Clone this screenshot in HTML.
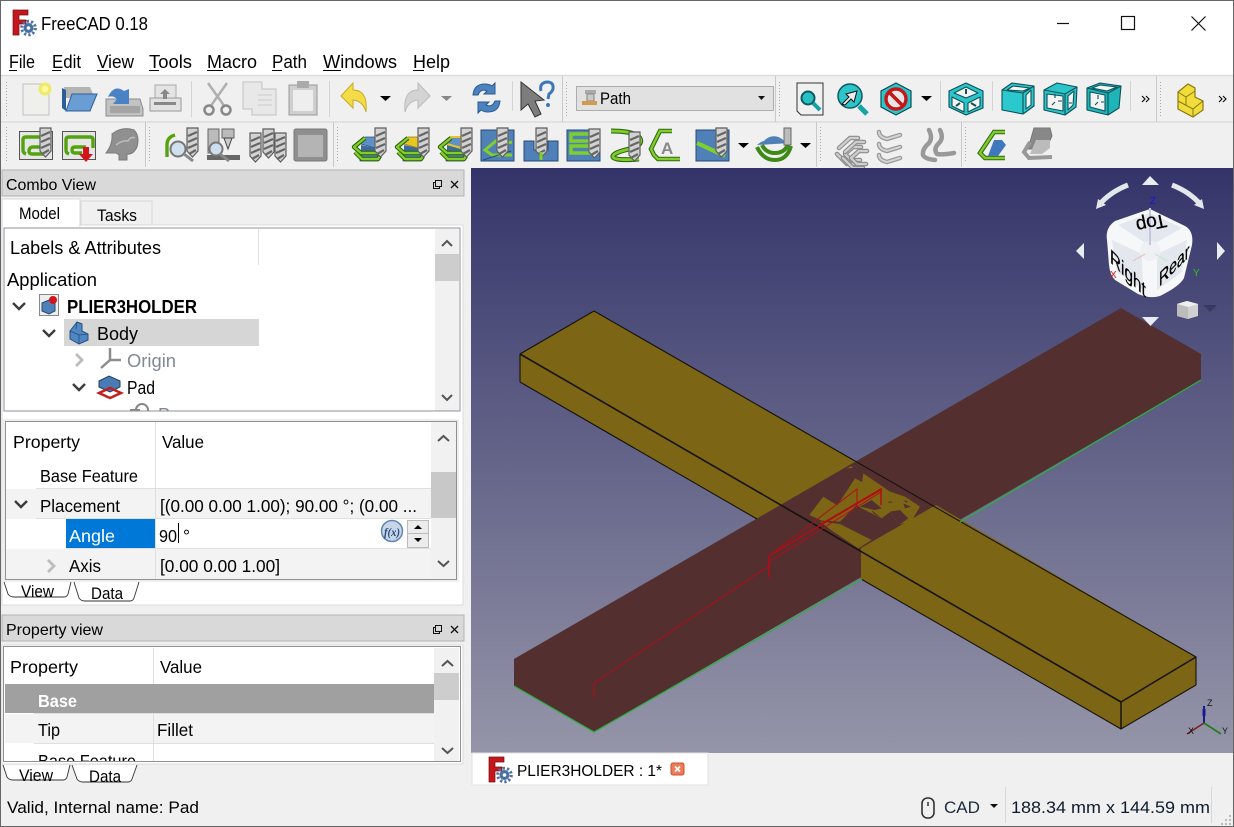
<!DOCTYPE html>
<html><head><meta charset="utf-8"><title>FreeCAD 0.18</title>
<style>
html,body{margin:0;padding:0;background:#f0f0f0;width:1234px;height:827px;overflow:hidden}
svg{display:block;font-family:"Liberation Sans",sans-serif}
</style></head><body>
<svg width="1234" height="827" viewBox="0 0 1234 827" xmlns="http://www.w3.org/2000/svg">
<defs>
<linearGradient id="bg" x1="0" y1="0" x2="0" y2="1"><stop offset="0" stop-color="#34346a"/><stop offset="1" stop-color="#9595a9"/></linearGradient>
<clipPath id="treeclip"><rect x="5" y="229" width="430" height="182"/></clipPath>
<clipPath id="pvclip"><rect x="5" y="648" width="429" height="113"/></clipPath>
<g id="dr"><path d="M0 0h11v23l-5.500 6-5.500-6z" fill="#d2d2d2" stroke="#5e5e5e" stroke-width="1.200"/><path d="M1 8l9-4M1 14l9-4M1 20l9-4M2 26l7-4" stroke="#666" stroke-width="2.200" fill="none"/></g>
<g id="logo"><path d="M0 0h15v5h-9v5h7v4h-7v11h-6z" fill="#c4161c" stroke="#7a0c10" stroke-width=".7"/><circle cx="15.500" cy="18" r="5" fill="#4a6fa5"/><circle cx="15.500" cy="18" r="6.800" fill="none" stroke="#4a6fa5" stroke-width="3" stroke-dasharray="2.200 2.100"/><circle cx="15.500" cy="18" r="1.800" fill="#fff"/></g>
<g id="stgreen" fill="none"><path d="M7 10L-4 19 3 25H21M-3 24l7 7H20l2-3" stroke="#2a5c10" stroke-width="4.400" stroke-linejoin="round"/><path d="M7 10L-4 19 3 25H21M-3 24l7 7H20l2-3" stroke="#80cf28" stroke-width="2.400" stroke-linejoin="round"/></g>
<g id="stbase"><rect x="2" y="25" width="18" height="8" fill="#4f80b8" stroke="#274a75" stroke-width=".7"/><path d="M3 17L17 20V25H3z" fill="#3c6a9f"/></g>
<g id="grayc"><path d="M-11 2l11-10h8M-13 8l10 10h10M-5 8l8-7h8M-5 8l6 6h9" fill="none" stroke="#8c8c8c" stroke-width="4.500" stroke-linecap="round"/><path d="M-11 2l11-10h8M-13 8l10 10h10M-5 8l8-7h8M-5 8l6 6h9" fill="none" stroke="#cfcfcf" stroke-width="2.200" stroke-linecap="round"/></g>
</defs>

<rect width="1234" height="827" fill="#f0f0f0"/>
<!-- title + menu -->
<rect x="0" y="0" width="1234" height="75" fill="#fff"/>
<use href="#logo" x="13" y="10"/>
<text x="41" y="30" font-size="18" textLength="107" lengthAdjust="spacingAndGlyphs">FreeCAD 0.18</text>
<path d="M1057 23.500h12" stroke="#111" stroke-width="1.200"/>
<rect x="1121.500" y="16.500" width="13" height="13" fill="none" stroke="#111" stroke-width="1.200"/>
<path d="M1191.500 16.500l14 14M1205.500 16.500l-14 14" stroke="#111" stroke-width="1.200"/>
<g font-size="18">
<text x="9" y="68" textLength="26" lengthAdjust="spacingAndGlyphs">File</text>
<text x="52" y="68" textLength="29" lengthAdjust="spacingAndGlyphs">Edit</text>
<text x="97" y="68" textLength="37" lengthAdjust="spacingAndGlyphs">View</text>
<text x="149" y="68" textLength="43" lengthAdjust="spacingAndGlyphs">Tools</text>
<text x="207" y="68" textLength="50" lengthAdjust="spacingAndGlyphs">Macro</text>
<text x="272" y="68" textLength="35" lengthAdjust="spacingAndGlyphs">Path</text>
<text x="323" y="68" textLength="74" lengthAdjust="spacingAndGlyphs">Windows</text>
<text x="413" y="68" textLength="37" lengthAdjust="spacingAndGlyphs">Help</text>
</g>
<path d="M9 70.500h8M52 70.500h9M97 70.500h12M149 70.500h10M207 70.500h16M272 70.500h10M323 70.500h18M413 70.500h11" stroke="#000"/>

<!-- toolbars -->
<rect x="0" y="76" width="1234" height="92" fill="#f0f0f0"/>
<path d="M0 75.500H1234M0 122H1234" stroke="#dcdcdc" stroke-width="1.500"/>
<path d="M562.500 76v46M775.500 76v46M1156.500 76v46M145.500 122v45M333.500 122v45M816.500 122v45M961.500 122v45" stroke="#c9c9c9"/>
<path d="M191.500 81v36M329.500 81v36M512.500 81v30M940.500 81v30M992.500 81v30M1130.500 81v30" stroke="#d4d4d4"/>
<g stroke="#a8a8a8" stroke-dasharray="1 2" fill="none">
<path d="M6.500 82v36M6.500 127v36M149.500 127v36M337.500 127v36M566.500 82v36M779.500 82v36M820.500 127v36M965.500 127v36M1160.500 82v36"/>
</g>
<!-- row1 -->
<path d="M23 84h26v31H23z" fill="#efefec" stroke="#c2c2c2"/><circle cx="45" cy="89" r="6.500" fill="#f0ea6a"/><circle cx="45" cy="89" r="3.200" fill="#fffca0"/>
<path d="M64 87h26l3 7v4H65z" fill="#b4b4b4"/><path d="M66 111l6-17h25l-7 17z" fill="#6a9dd4" stroke="#2c5e99"/><path d="M62 88v20l4 3V90z" fill="#2c5e99"/>
<path d="M106 99h34l3 10v7h-37z" fill="#c2c2c2" stroke="#8c8c8c"/><path d="M108 97q6-13 16-6l5-2v15h-16l4-5q-4-4-9-2z" fill="#4a82c6"/><rect x="110" y="106" width="30" height="7" fill="#a4a4a4"/>
<path d="M155 85h21v15h-21z" fill="#e4e4e4" stroke="#aaa"/><path d="M150 98h31v13h-31z" fill="#e2e2e2" stroke="#999"/><path d="M165 89l5 5h-3v5h-4v-5h-3z" fill="#888"/><rect x="154" y="102" width="22" height="3" fill="#888"/>
<g fill="none" stroke="#b0b0b0" stroke-width="2.500"><path d="M208 83l17 24M227 83l-17 24"/><circle cx="209" cy="110" r="4.500" stroke="#888"/><circle cx="226" cy="110" r="4.500" stroke="#888"/></g>
<path d="M243 82h19v7h14v26h-24v-6h-9z" fill="#e8e8e8" stroke="#c2c2c2"/><path d="M258 95h14M258 100h14M258 105h14" stroke="#ccc"/>
<rect x="289" y="85" width="28" height="30" fill="#cfcfcf" stroke="#999"/><rect x="293" y="90" width="20" height="21" fill="#eee"/><rect x="297" y="81" width="12" height="7" fill="#aaa"/>
<path d="M341 96l12-13v7q15 0 13 22-3-11-13-12v8z" fill="#f4dc48" stroke="#c4ac20"/>
<path d="M380 96h11l-5.500 5z" fill="#000"/>
<path d="M430 96l-12-13v7q-15 0-13 22 3-11 13-12v8z" fill="#d4d4d4" stroke="#bbb"/>
<path d="M441 96h11l-5.500 5z" fill="#888"/>
<path d="M473 95q1-11 12-11 4 0 7 2l3-3v11h-11l3-3q-6-3-9 4zM500 101q-1 11-12 11-4 0-7-2l-3 3V102h11l-3 3q6 3 9-4z" fill="#4c82bd" stroke="#2a5a94"/>
<path d="M521 82l23 18-9 1 6 13-6 3-7-13-7 6z" fill="#7d7d7d" stroke="#333"/><path d="M541 91q-2-8 6-9 7 0 6 7-1 3-4 5l-1 5" fill="none" stroke="#3c78b8" stroke-width="3"/><circle cx="548" cy="105" r="2" fill="#3c78b8"/>
<!-- combobox -->
<rect x="576.500" y="86.500" width="197" height="24" fill="#e1e1e1" stroke="#adadad"/>
<rect x="585" y="90" width="11" height="4" fill="#aaa"/><rect x="587" y="94" width="7" height="7" fill="#c9c9c9" stroke="#888"/><rect x="582" y="101" width="15" height="4" fill="#d29a4c"/>
<text x="600" y="104" font-size="17" textLength="31" lengthAdjust="spacingAndGlyphs">Path</text>
<path d="M758 96h7l-3.500 4z" fill="#111"/>
<!-- view icons -->
<path d="M797 83h26v32h-22l-4-4z" fill="#f0f0f0" stroke="#333"/><circle cx="808" cy="98" r="6.500" fill="#29c0c4" stroke="#0e5a5e" stroke-width="2"/><path d="M813 103l7 7" stroke="#14a0a5" stroke-width="4"/>
<circle cx="850" cy="96" r="12" fill="#2cc5c8" stroke="#0f5960" stroke-width="1.500"/><path d="M842 104l7-7-3-3 11-3-3 11-3-3-6 6z" fill="#eee" stroke="#111"/><path d="M859 106l8 8" stroke="#17a3a8" stroke-width="5"/>
<path d="M896 83l15 8v16l-15 8-15-8V91z" fill="#2cc5c8" stroke="#0d4d54" stroke-width="1.200"/><circle cx="896" cy="99" r="10" fill="#e6e6e6" stroke="#c5161c" stroke-width="3.500"/><path d="M889 92l14 14" stroke="#c5161c" stroke-width="3.500"/>
<path d="M921 96h11l-5.500 5z" fill="#000"/>
<!-- view cubes -->
<g stroke="#0d5158" stroke-width="1.100" stroke-linejoin="round">
<path d="M966 83L983 91V108L966 115 949 107V91z" fill="#2bc4c8"/>
<path d="M966 87L978 93 966 98 954 93zM952 97L964 103V112L952 106zM980 97L968 103V112L980 106z" fill="#f2f4f4"/>
<path d="M966 89v5M956 106l4-3M971 103l5 3" stroke-width="2" fill="none"/>

<path d="M1002 90L1012 83 1034 86V106L1023 114 1002 110z" fill="#2bc9cd"/>
<path d="M1007 90L1013 86 1030 88 1023 91zM1026 95L1031 90V105L1026 109z" fill="#f2f4f4"/>
<path d="M1002 90L1023 93 1034 86M1023 93V114" fill="none"/>

<path d="M1044 90L1057 83 1077 87 1076 107 1065 115 1044 110z" fill="#2bc4c8"/>
<path d="M1047 94L1063 96V111L1047 108zM1068 96L1074 91 1073 105 1068 110z" fill="#f2f4f4"/>
<path d="M1044 90L1065 94 1077 87M1065 94V115M1055 94v4M1052 105l3-3M1058 101h4M1069 103h3" fill="none"/>

<path d="M1087 88L1100 83 1121 86 1119 108 1108 115 1087 110z" fill="#1fb4b8"/>
<path d="M1092 88L1100 85 1117 87 1107 91zM1090 92L1105 95V111L1090 107z" fill="#f2f4f4"/>
<path d="M1087 88L1108 93 1121 86M1108 93V115M1098 95v4M1095 105l3-3M1101 102h3" fill="none"/>
</g>
<path d="M1142 96l3 3-3 3M1146 96l3 3-3 3M1219 96l3 3-3 3M1223 96l3 3-3 3" stroke="#111" stroke-width="1.200" fill="none"/>
<path d="M1178 92l10-8 7 4v9l8 4v9l-10 7-15-8z" fill="#f0dd3c" stroke="#8a7a10" stroke-width="1.200"/><path d="M1178 92l8 5 9-6M1186 97v8M1178 101l15 8 10-8M1193 109v7" fill="none" stroke="#8a7a10"/>

<!-- row2 -->
<g fill="none">
<rect x="19.500" y="131.500" width="33" height="28" fill="#e6e6e6" stroke="#555"/><path d="M26 154q-3-1-3-4v-10q0-3 3-3h18M44 154H32q-3 0-3-3t3-4h12" stroke="#52a30e" stroke-width="3.400"/><use href="#dr" x="40" y="128"/>
<rect x="62.500" y="131.500" width="33" height="28" fill="#e6e6e6" stroke="#555"/><path d="M69 154q-3-1-3-4v-10q0-3 3-3h21q3 0 3 3v8M86 147H75q-3 0-3 3t3 3h7" stroke="#52a30e" stroke-width="3.400"/>
<path d="M83 147h6v7h4l-7 8-7-8h4z" fill="#d4141c"/>
<path d="M112 134q10-8 22-4 6 6 3 17-4 8-10 7v6h-8v-5l-3-2-10 0q7-9 6-19z" fill="#909090" stroke="#7a7a7a"/><path d="M116 145q6-5 12-4 3-5 7-3" stroke="#bbb" stroke-width="1.500"/>
<path d="M167 157v-12q0-8 8-10" stroke="#52a30e" stroke-width="3.400"/><use href="#dr" x="187" y="128"/><circle cx="178" cy="149" r="7.500" fill="#cfe0ee" stroke="#777" stroke-width="2"/><path d="M184 154l9 7" stroke="#888" stroke-width="3"/>
<rect x="208" y="129" width="11" height="24" fill="#bbb" stroke="#666"/><rect x="222" y="129" width="12" height="9" fill="#bbb" stroke="#666"/><path d="M224 138h8l-4 11z" fill="#ccc" stroke="#444"/><rect x="207" y="155" width="33" height="5" fill="#666"/><circle cx="216" cy="149" r="6.500" fill="#cde" stroke="#777" stroke-width="2"/><path d="M220 154l9 7" stroke="#888" stroke-width="3"/>
<use href="#dr" x="250" y="133"/><use href="#dr" x="263" y="129"/><use href="#dr" x="275" y="133"/>
<rect x="294" y="129" width="33" height="32" rx="2" fill="#8f8f8f" stroke="#777"/><rect x="298" y="135" width="25" height="22" fill="#b4b4b4"/>
</g>
<g transform="translate(358 128)"><use href="#stbase"/><path d="M3 16L7 9H17V20z" fill="#5f90c8" stroke="#2c5585" stroke-width=".7"/><use href="#stgreen"/><use href="#dr" x="17" y="0"/></g>
<g transform="translate(401 128)"><use href="#stbase"/><path d="M3 16L7 9H17V20z" fill="#e8c81e" stroke="#8f7a10" stroke-width=".7"/><use href="#stgreen"/><use href="#dr" x="17" y="0"/></g>
<g transform="translate(444 128)"><use href="#stbase"/><path d="M3 16L7 9H17V20z" fill="#5f90c8" stroke="#e6c524" stroke-width="2"/><use href="#stgreen"/><use href="#dr" x="17" y="0"/></g>
<rect x="481" y="130" width="33" height="31" fill="#4f80b8" stroke="#274a75"/><path d="M497 140L485 150 492 155H512M497 145l15-3" stroke="#7fd02a" stroke-width="3" fill="none"/><path d="M483 160l28-9" stroke="#274a75" fill="none"/><use href="#dr" x="497" y="128"/>
<path d="M524 141h10v9h14v-9h10v20h-34z" fill="#4f80b8" stroke="#274a75"/><use href="#dr" x="536" y="128"/><path d="M541 152v8" stroke="#7fd02a" stroke-width="3"/>
<rect x="567" y="130" width="33" height="31" fill="#4f80b8" stroke="#274a75"/><path d="M595 134h-24v7h20v5h-20v7h26" fill="none" stroke="#7fd02a" stroke-width="3.500"/><use href="#dr" x="589" y="129"/>
<path d="M611 131q22 0 28 6 6 8-10 12-17 4-16 8 2 4 26 2" fill="none" stroke="#2f6a10" stroke-width="5"/><path d="M611 131q22 0 28 6 6 8-10 12-17 4-16 8 2 4 26 2" fill="none" stroke="#80cc2c" stroke-width="2.800"/><use href="#dr" x="629" y="132"/>
<path d="M672 131h-12l-9 18 3 6 4 4h22" fill="none" stroke="#2f6a10" stroke-width="4.500"/><path d="M672 131h-12l-9 18 3 6 4 4h22" fill="none" stroke="#80cc2c" stroke-width="2.400"/>
<text x="661" y="154" font-size="17" font-weight="bold" fill="#888">A</text>
<rect x="696" y="130" width="33" height="31" fill="#4f80b8" stroke="#274a75"/><path d="M697 143l28 13" stroke="#7fd02a" stroke-width="4"/><use href="#dr" x="716" y="128"/>
<path d="M738 143h11l-5.500 5z" fill="#000"/><path d="M800 143h11l-5.500 5z" fill="#000"/>
<path d="M757 145q5-4 7-4a13 13 0 0 1 20 0q2 0 7 2" fill="#4f80b8"/><path d="M757 147q6 13 18 13 12 0 16-14M762 145q4 8 13 8 10 0 13-9" fill="none" stroke="#3e8a18" stroke-width="4"/><rect x="784" y="128" width="7" height="17" fill="#bbb" stroke="#666"/>
<use href="#grayc" x="850" y="146"/><use href="#grayc" x="856" y="150"/>
<path d="M879 132q0 5 8 7l13-4M879 144q0 5 8 7l13-4M879 155q0 5 8 7l13-4" fill="none" stroke="#999" stroke-width="4.500" stroke-linecap="round"/><path d="M879 132q0 5 8 7l13-4M879 144q0 5 8 7l13-4M879 155q0 5 8 7l13-4" fill="none" stroke="#d4d4d4" stroke-width="2" stroke-linecap="round"/>
<path d="M929 130q4 8 0 13-7 6-6 12 2 4 12 5M940 130q4 8-1 13-6 6-2 11 5 1 17-1" fill="none" stroke="#999" stroke-width="4.500" stroke-linecap="round"/>
<path d="M1005 132h-11l-14 21 5 5h20" fill="none" stroke="#2f6a10" stroke-width="4.500"/><path d="M1005 132h-11l-14 21 5 5h20" fill="none" stroke="#80cc2c" stroke-width="2.400"/><path d="M994 140h8l4 5-8 11h-10z" fill="#3f78bd"/>
<path d="M1034 128h16l2 8-6 13h-18z" fill="#888" stroke="#777"/><path d="M1030 142l-6 10 5 6 23-1" fill="none" stroke="#999" stroke-width="4"/><path d="M1036 140h14v8l-8 6h-12z" fill="#bbb"/>

<!-- left dock -->
<rect x="2" y="170" width="462" height="26" fill="#d9d9d9" stroke="#b4b4b4"/>
<text x="6" y="190" font-size="16" textLength="90" lengthAdjust="spacingAndGlyphs">Combo View</text>
<g fill="none" stroke="#111"><rect x="433.500" y="182.500" width="6" height="6" fill="#d9d9d9"/><rect x="435.500" y="180.500" width="6" height="6" fill="#d9d9d9"/><path d="M451 181l7 7M458 181l-7 7" stroke-width="1.300"/></g>
<rect x="2" y="225" width="461" height="380" fill="#fff" stroke="#dcdcdc"/>
<path d="M81 225v-24h71v24z" fill="#f0f0f0" stroke="#d9d9d9"/>
<path d="M2 226v-27h78v27z" fill="#fff" stroke="#d9d9d9"/><rect x="3" y="224" width="76" height="3" fill="#fff"/>
<text x="19" y="219" font-size="16.500" textLength="41" lengthAdjust="spacingAndGlyphs">Model</text>
<text x="97" y="221" font-size="16.500" textLength="40" lengthAdjust="spacingAndGlyphs">Tasks</text>

<!-- tree -->
<rect x="4" y="228" width="456" height="183" fill="#fff"/>
<g clip-path="url(#treeclip)">
<path d="M258.500 229v36" stroke="#e2e2e2"/>
<rect x="64" y="319" width="195" height="27" fill="#d6d6d6"/>
<g font-size="18">
<text x="10" y="254" textLength="151" lengthAdjust="spacingAndGlyphs">Labels &amp; Attributes</text>
<text x="7" y="286" textLength="90" lengthAdjust="spacingAndGlyphs">Application</text>
<text x="67" y="313" font-weight="bold" textLength="130" lengthAdjust="spacingAndGlyphs">PLIER3HOLDER</text>
<text x="97" y="340" textLength="41" lengthAdjust="spacingAndGlyphs">Body</text>
<text x="127" y="367" fill="#7f8a94" textLength="49" lengthAdjust="spacingAndGlyphs">Origin</text>
<text x="127" y="394" textLength="28" lengthAdjust="spacingAndGlyphs">Pad</text>
<text x="158" y="421" fill="#7f8a94">P</text>
</g>
<path d="M13 303l6 6 6-6M43 330l6 6 6-6M73 384l6 6 6-6" fill="none" stroke="#3c3c3c" stroke-width="2.400"/>
<path d="M76 354l6 6-6 6" fill="none" stroke="#bcbcbc" stroke-width="2.800"/>
<rect x="39.500" y="294.500" width="19" height="21" fill="#eee" stroke="#888"/><path d="M42 303l7-3 6 3v8l-6 3-7-3z" fill="#4f80b8" stroke="#254a72"/><circle cx="53" cy="300" r="4" fill="#d4141c"/>
<path d="M70 331L77 322 82 324V331L88 334V340L79 344 70 339z" fill="#4f86c4" stroke="#264e7e"/><path d="M70 331L79 335 88 334M79 335V344M77 322L76 329" fill="none" stroke="#264e7e" stroke-width=".8"/>
<path d="M110 348v12M110 360l-9 8M110 360h11" stroke="#8c8c8c" stroke-width="2.500" fill="none"/>
<path d="M99 381l10-5 11 5v6l-10 5-11-5z" fill="#4a7bb5" stroke="#1f3f66"/><path d="M99 393l11-5 11 5-11 5z" fill="none" stroke="#c1201c" stroke-width="2.500"/>
<path d="M130 410h10" stroke="#888" stroke-width="2"/><circle cx="142" cy="410" r="6" fill="none" stroke="#888" stroke-width="2"/>
</g>
<rect x="435" y="229" width="24" height="182" fill="#f1f1f1"/><rect x="435" y="254" width="24" height="27" fill="#cdcdcd"/>
<path d="M442 246l5-5 5 5M442 395l5 5 5-5" fill="none" stroke="#555" stroke-width="2"/>
<rect x="4" y="228" width="456" height="183" fill="none" stroke="#8d9297"/>

<!-- properties 1 -->
<rect x="4" y="420" width="454" height="161" fill="#fff" stroke="#dcdcdc"/>
<rect x="5.500" y="421.500" width="451" height="158" fill="#fff"/>
<rect x="6" y="489" width="425" height="30" fill="#f3f3f3"/>
<rect x="6" y="549" width="425" height="30" fill="#f3f3f3"/>
<rect x="66" y="519" width="89" height="30" fill="#0078d7"/>
<path d="M155.500 422v157M36 488.500H431M36 518.500H431M66 548.500H431" stroke="#dfdfdf"/>
<g font-size="17.500">
<text x="13" y="448" textLength="67" lengthAdjust="spacingAndGlyphs">Property</text>
<text x="162" y="448" textLength="42" lengthAdjust="spacingAndGlyphs">Value</text>
<text x="40" y="482" textLength="98" lengthAdjust="spacingAndGlyphs">Base Feature</text>
<text x="40" y="512" textLength="80" lengthAdjust="spacingAndGlyphs">Placement</text>
<text x="160" y="512" textLength="257" lengthAdjust="spacingAndGlyphs">[(0.00 0.00 1.00); 90.00 °; (0.00 ...</text>
<text x="69" y="542" fill="#fff" textLength="46" lengthAdjust="spacingAndGlyphs">Angle</text>
<text x="159" y="542" textLength="18" lengthAdjust="spacingAndGlyphs">90</text>
<text x="183" y="542">°</text>
<text x="69" y="572" textLength="32" lengthAdjust="spacingAndGlyphs">Axis</text>
<text x="160" y="572" textLength="120" lengthAdjust="spacingAndGlyphs">[0.00 0.00 1.00]</text>
</g>
<path d="M178.500 523v20" stroke="#000"/>
<path d="M15 501l6 6 6-6" fill="none" stroke="#3c3c3c" stroke-width="2.400"/>
<path d="M48 560l6 6-6 6" fill="none" stroke="#bcbcbc" stroke-width="2.800"/>
<circle cx="392" cy="531" r="10.500" fill="#c6d6e8" stroke="#6186b0" stroke-width="1.500"/>
<text x="384" y="536" font-size="12" font-family="Liberation Serif" font-style="italic" font-weight="bold" fill="#274a7a" textLength="16" lengthAdjust="spacingAndGlyphs">f(x)</text>
<rect x="407.500" y="520.500" width="21" height="27" fill="#ececec" stroke="#bbb"/><path d="M407 533.500h21" stroke="#bbb"/>
<path d="M414 529l4-4 4 4zM414 538l4 4 4-4z" fill="#000"/>
<rect x="431" y="422" width="25" height="157" fill="#f1f1f1"/><rect x="431" y="472" width="25" height="46" fill="#c8c8c8"/>
<path d="M438 441l5.500-5 5.500 5M438 561l5.500 5 5.500-5" fill="none" stroke="#555" stroke-width="2"/>
<rect x="5.500" y="421.500" width="451" height="158" fill="none" stroke="#8d9297"/>
<path d="M4 582l4 12q2 3 6 3h50q3 0 4-3l3-12" fill="#fff" stroke="#333" stroke-width=".9"/>
<path d="M74 582l5 16q2 3 6 3h45q3 0 4-3l5-16" fill="#fff" stroke="#333" stroke-width=".9"/>
<text x="21" y="597" font-size="16.500" textLength="33" lengthAdjust="spacingAndGlyphs">View</text>
<text x="91" y="599" font-size="16.500" textLength="32" lengthAdjust="spacingAndGlyphs">Data</text>

<!-- property view dock -->
<rect x="2" y="615" width="462" height="26" fill="#d9d9d9" stroke="#b4b4b4"/>
<text x="6" y="635" font-size="16" textLength="97" lengthAdjust="spacingAndGlyphs">Property view</text>
<g fill="none" stroke="#111"><rect x="433.500" y="627.500" width="6" height="6" fill="#d9d9d9"/><rect x="435.500" y="625.500" width="6" height="6" fill="#d9d9d9"/><path d="M451 626l7 7M458 626l-7 7" stroke-width="1.300"/></g>
<rect x="2" y="645" width="461" height="119" fill="#fff" stroke="#dcdcdc"/>
<g clip-path="url(#pvclip)">
<rect x="4" y="684" width="430" height="29" fill="#a0a0a0"/>
<rect x="4" y="714" width="430" height="29" fill="#f3f3f3"/>
<path d="M153.500 648v36M153.500 714v47M34 713.500H434M34 743.500H434" stroke="#dfdfdf"/>
<g font-size="17.500">
<text x="10" y="673" textLength="68" lengthAdjust="spacingAndGlyphs">Property</text>
<text x="160" y="673" textLength="42" lengthAdjust="spacingAndGlyphs">Value</text>
<text x="38" y="707" font-weight="bold" fill="#fff" textLength="39" lengthAdjust="spacingAndGlyphs">Base</text>
<text x="38" y="736" textLength="22" lengthAdjust="spacingAndGlyphs">Tip</text>
<text x="157" y="736" textLength="36" lengthAdjust="spacingAndGlyphs">Fillet</text>
<text x="38" y="767" textLength="98" lengthAdjust="spacingAndGlyphs">Base Feature</text>
</g>
</g>
<rect x="434" y="648" width="25" height="113" fill="#f1f1f1"/><rect x="434" y="673" width="25" height="27" fill="#cdcdcd"/>
<path d="M442 666l5.500-5 5.500 5M442 748l5.500 5 5.500-5" fill="none" stroke="#555" stroke-width="2"/>
<rect x="3.500" y="646.500" width="457" height="115" fill="none" stroke="#8d9297"/>
<path d="M3 765l4 12q2 3 6 3h50q3 0 4-3l3-12" fill="#fff" stroke="#333" stroke-width=".9"/>
<path d="M72 765l5 14q2 3 6 3h45q3 0 4-3l5-14" fill="#fff" stroke="#333" stroke-width=".9"/>
<text x="19" y="781" font-size="16.500" textLength="34" lengthAdjust="spacingAndGlyphs">View</text>
<text x="89" y="782" font-size="16.500" textLength="32" lengthAdjust="spacingAndGlyphs">Data</text>

<!-- viewport -->
<rect x="471" y="168" width="763" height="585" fill="url(#bg)"/>
<!-- yellow bar -->
<path d="M520 354L594 311 1196 657V685L1121 729 520 382z" fill="#7c6615"/>
<!-- brown bar -->
<path d="M514 659L1121 308 1201 354V380L594 732 514 686z" fill="#532f30"/>
<!-- yellow right part over brown -->
<path d="M861 548L936 505 1196 657V685L1121 729 861 579z" fill="#7c6615"/>
<!-- central patches -->
<g transform="translate(740 450) scale(.3333)">
<path d="M208 195L250 140 292 166 345 85 366 96 370 70 450 125 495 140 540 170 515 212 478 224 450 186 425 205 365 175 350 165 300 215 245 212z" fill="#7c6615"/>
<path d="M240 214L300 222 395 270 355 295 270 238z" fill="#7c6615"/>
<path d="M360 170L395 150 425 175 405 180zM450 185L480 180 505 205 478 224zM490 160L512 170 495 175zM395 180L425 205 400 190zM320 50L345 45 330 60z" fill="#532f30"/>
<path d="M445 155h12v3h-12zM490 150l14 5-6 3z" fill="#532f30"/>
<path d="M320 55l15-7 3 6z" fill="#7c6615"/>
</g>
<!-- edges -->
<g fill="none" stroke="#14130c">
<path d="M520 354L594 311M520 354V382" stroke-width="1.100"/>
<path d="M520 354L1121 702" stroke-width="1.600"/>
<path d="M594 311L1196 657V685" stroke-width="1.100"/>
<path d="M520 382L757 519M861 579L1121 729L1196 685" stroke-width="1.100"/>
<path d="M1121 702L1196 657M1121 702V729" stroke-width="1.500"/>
</g>
<g fill="none" stroke="#2cb040" stroke-width="1.200"><path d="M514 686L594 732 862 579M960 522L1201 380"/></g>
<g fill="none" stroke="#b30c14" stroke-width="1">
<path d="M594 698V683L769 566"/>
<path d="M769 578V556L881 489V505" stroke-width="1.500"/>
<path d="M769 556L857 489V505"/>
<path d="M769 562L881 492"/>
<path d="M820 525L880 490" stroke-width="2"/>
</g>
<!-- nav cube -->
<path d="M1128 185Q1110 192 1099 205" fill="none" stroke="#e3e7ec" stroke-width="5"/><path d="M1096 209l2-10 8 6z" fill="#e3e7ec"/>
<path d="M1172 185Q1190 192 1201 205" fill="none" stroke="#e3e7ec" stroke-width="5"/><path d="M1204 209l-2-10-8 6z" fill="#e3e7ec"/>
<path d="M1150 176l-8 9h17zM1076 251l8-8v16zM1225 251l-8-9v18zM1142 317h17l-8.500 9z" fill="#e9edf2"/>
<path d="M1150 209L1185 226Q1194 231 1192 245L1184 278Q1180 286 1160 296Q1150 299 1138 294L1115 280Q1110 275 1109 265L1107 240Q1105 228 1115 221Z" fill="#f5f7f9"/>
<path d="M1118 225L1150 213 1182 228 1150 246zM1112 240L1142 254 1143 290 1117 272zM1187 240L1157 254 1157 290 1182 272z" fill="#e3e8ee"/>
<circle cx="1150" cy="251" r="10" fill="#eef1f4"/>
<path d="M1150 208V245" stroke="#c4c6e0" stroke-width="2"/>
<path d="M1145 254l-12 7" stroke="#e8b8b8"/><path d="M1155 254l12 7" stroke="#bfe6bf"/>
<text transform="translate(1150 217) rotate(168)" text-anchor="middle" font-size="19" fill="#000" stroke="#000" stroke-width=".3">Top</text>
<text transform="matrix(.85 .85 0 1 1110 262)" font-size="20" fill="#000" stroke="#000" stroke-width=".3" textLength="42" lengthAdjust="spacingAndGlyphs">Right</text>
<text transform="matrix(.8 -.8 0 1 1159 287)" font-size="20" fill="#000" stroke="#000" stroke-width=".3" textLength="38" lengthAdjust="spacingAndGlyphs">Rear</text>
<text x="1150" y="204" font-size="10" fill="#1414e0">Z</text>
<text x="1110" y="278" font-size="10" fill="#e01414">X</text>
<text x="1193" y="276" font-size="10" fill="#14d014">Y</text>
<path d="M1177 304l10-3 11 3v12l-10 3-11-3z" fill="#d0d0d0"/><path d="M1177 304l10-3 11 3-10 3z" fill="#eee"/><path d="M1177 304l11 3v12l-11-3z" fill="#bcbcbc"/>
<path d="M1203 305h14l-7 7z" fill="#3a3a60"/>
<!-- axes -->
<path d="M1204 723V706" stroke="#1a1a90" stroke-width="2"/><rect x="1202.500" y="709" width="3" height="7" fill="#1a1a90"/>
<path d="M1204 723l-17 11" stroke="#7c1c1c" stroke-width="1.400"/>
<path d="M1204 723l17 11" stroke="#1f7c1f" stroke-width="1.700"/>
<text x="1207" y="706" font-size="9" fill="#111">Z</text>
<text x="1188" y="734" font-size="9" fill="#111">X</text>
<text x="1222" y="734" font-size="9" fill="#111">Y</text>

<!-- tab bar -->
<rect x="471" y="753" width="763" height="40" fill="#f0f0f0"/>
<rect x="472" y="753" width="236" height="32" fill="#fff" stroke="#e2e2e2"/>
<use href="#logo" x="489" y="757"/>
<text x="517" y="776" font-size="16" textLength="145" lengthAdjust="spacingAndGlyphs">PLIER3HOLDER : 1*</text>
<rect x="671" y="763" width="13" height="12" rx="2" fill="#ee7c58" stroke="#c8502c"/><path d="M675 766.500l5 5M680 766.500l-5 5" stroke="#fff" stroke-width="1.600"/>

<!-- status -->
<text x="7" y="813" font-size="17" textLength="192" lengthAdjust="spacingAndGlyphs">Valid, Internal name: Pad</text>
<rect x="922" y="798" width="12" height="20" rx="5.500" fill="none" stroke="#333" stroke-width="1.600"/><path d="M928 802v4" stroke="#333" stroke-width="1.500"/>
<text x="944" y="813" font-size="17" textLength="36" lengthAdjust="spacingAndGlyphs" fill="#1c2c3c">CAD</text>
<path d="M990 804h8l-4 4z" fill="#111"/>
<path d="M1005.500 787v36M1211.500 787v36" stroke="#d8d8d8"/>
<text x="1011" y="813" font-size="17" textLength="199" lengthAdjust="spacingAndGlyphs" fill="#0c1c2c">188.34 mm x 144.59 mm</text>
<path d="M1229 815h2v2h-2zM1225 819h2v2h-2zM1229 819h2v2h-2zM1221 823h2v2h-2zM1225 823h2v2h-2zM1229 823h2v2h-2z" fill="#bbb"/>

<!-- window border -->
<rect x=".5" y=".5" width="1233" height="826" fill="none" stroke="#666"/>
</svg>
</body></html>
